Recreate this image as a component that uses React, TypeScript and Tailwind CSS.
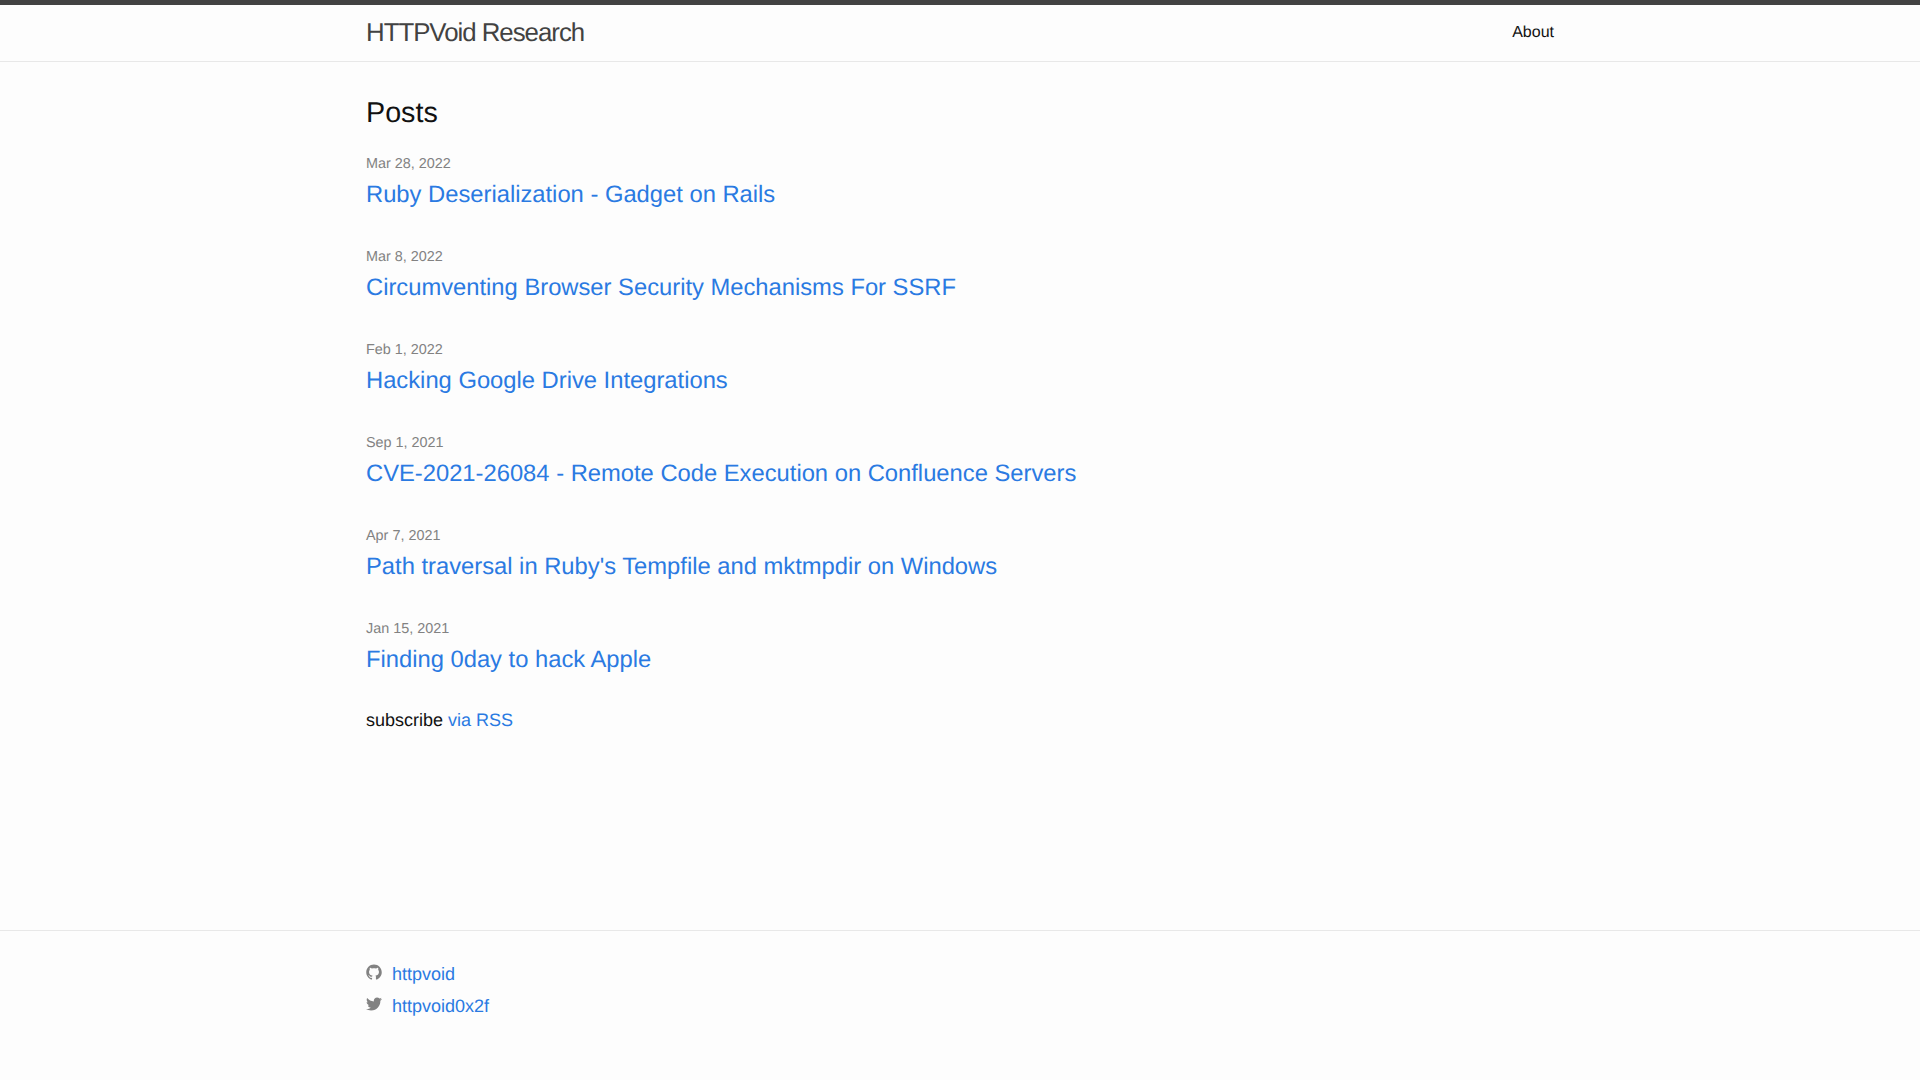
const posts = [
  { date: "Mar 28, 2022", title: "Ruby Deserialization - Gadget on Rails" },
  { date: "Mar 8, 2022", title: "Circumventing Browser Security Mechanisms For SSRF" },
  { date: "Feb 1, 2022", title: "Hacking Google Drive Integrations" },
  { date: "Sep 1, 2021", title: "CVE-2021-26084 - Remote Code Execution on Confluence Servers" },
  { date: "Apr 7, 2021", title: "Path traversal in Ruby's Tempfile and mktmpdir on Windows" },
  { date: "Jan 15, 2021", title: "Finding 0day to hack Apple" },
]

function GithubIcon() {
  return (
    <svg viewBox="0 0 16 16" className="w-4 h-4 mb-[4px] fill-[#828282]">
      <path d="M7.999,0.431c-4.285,0-7.76,3.474-7.76,7.761 c0,3.428,2.223,6.337,5.307,7.363c0.388,0.071,0.53-0.168,0.53-0.374c0-0.184-0.007-0.672-0.01-1.32 c-2.159,0.469-2.614-1.04-2.614-1.04c-0.353-0.896-0.862-1.135-0.862-1.135c-0.705-0.481,0.053-0.472,0.053-0.472 c0.779,0.055,1.189,0.8,1.189,0.8c0.692,1.186,1.816,0.843,2.258,0.645c0.071-0.502,0.271-0.843,0.493-1.037 C4.86,11.425,3.049,10.76,3.049,7.786c0-0.847,0.302-1.54,0.799-2.082C3.768,5.507,3.501,4.718,3.924,3.65 c0,0,0.652-0.209,2.134,0.796C6.677,4.273,7.34,4.187,8,4.184c0.659,0.003,1.323,0.089,1.943,0.261 c1.482-1.004,2.132-0.796,2.132-0.796c0.423,1.068,0.157,1.857,0.077,2.054c0.497,0.542,0.798,1.235,0.798,2.082 c0,2.981-1.814,3.637-3.543,3.829c0.279,0.24,0.527,0.713,0.527,1.437c0,1.037-0.01,1.874-0.01,2.129 c0,0.208,0.14,0.449,0.534,0.373c3.081-1.028,5.302-3.935,5.302-7.362C15.76,3.906,12.285,0.431,7.999,0.431z" />
    </svg>
  )
}

function TwitterIcon() {
  return (
    <svg viewBox="0 0 16 16" className="w-4 h-4 mb-[4px] fill-[#828282]">
      <path d="M15.969,3.058c-0.586,0.26-1.217,0.436-1.878,0.515c0.675-0.405,1.194-1.045,1.438-1.809 c-0.632,0.375-1.332,0.647-2.076,0.793c-0.596-0.636-1.446-1.033-2.387-1.033c-1.806,0-3.27,1.464-3.27,3.27 c0,0.256,0.029,0.506,0.085,0.745C5.163,5.404,2.753,4.102,1.14,2.124C0.859,2.607,0.698,3.168,0.698,3.767 c0,1.134,0.577,2.135,1.455,2.722C1.616,6.472,1.112,6.325,0.671,6.08c0,0.014,0,0.027,0,0.041c0,1.584,1.127,2.906,2.623,3.206 C3.02,9.402,2.731,9.442,2.433,9.442c-0.211,0-0.416-0.021-0.615-0.059c0.416,1.299,1.624,2.245,3.055,2.271 c-1.119,0.877-2.529,1.4-4.061,1.4c-0.264,0-0.524-0.015-0.78-0.046c1.447,0.928,3.166,1.469,5.013,1.469 c6.015,0,9.304-4.983,9.304-9.304c0-0.142-0.003-0.283-0.009-0.423C14.976,4.29,15.531,3.714,15.969,3.058z" />
    </svg>
  )
}

export default function App() {
  return (
    <div className="min-h-[1080px] flex flex-col bg-[#fdfdfd] text-[#111111] text-base leading-6 font-['Liberation_Sans',Arial,sans-serif] [text-rendering:geometricPrecision]">
      <header className="border-t-[5px] border-t-[#424242] border-b border-b-[#e8e8e8] h-[62px]">
        <div className="max-w-[1248px] mx-auto px-[30px] flex justify-between">
          <a className="text-[25.8px] leading-[56px] tracking-[-1px] text-[#424242]">HTTPVoid Research</a>
          <a className="leading-[55px] text-[#111111]">About</a>
        </div>
      </header>

      <main className="flex-1 pt-[30px]">
        <div className="max-w-[1248px] mx-auto px-[30px]">
          <h2 className="text-[28.7px] leading-[42px] mb-[18px]">Posts</h2>
          <ul>
            {posts.map((post) => (
              <li key={post.title} className="mb-[31px] last:mb-[27px]">
                <span className="text-[14.4px] text-[#828282]">{post.date}</span>
                <h3 className="text-[23.75px] leading-[38px]">
                  <a className="text-[#2a7ae2]">{post.title}</a>
                </h3>
              </li>
            ))}
          </ul>
          <p className="text-lg">
            subscribe <a className="text-[#2a7ae2]">via RSS</a>
          </p>
        </div>
      </main>

      <footer className="border-t border-t-[#e8e8e8] h-[150px] pt-[27px]">
        <div className="max-w-[1248px] mx-auto px-[30px] text-lg">
          <div className="flex items-center gap-[10px] h-8">
            <GithubIcon />
            <a className="text-[#2a7ae2]">httpvoid</a>
          </div>
          <div className="flex items-center gap-[10px] h-8">
            <TwitterIcon />
            <a className="text-[#2a7ae2]">httpvoid0x2f</a>
          </div>
        </div>
      </footer>
    </div>
  )
}
